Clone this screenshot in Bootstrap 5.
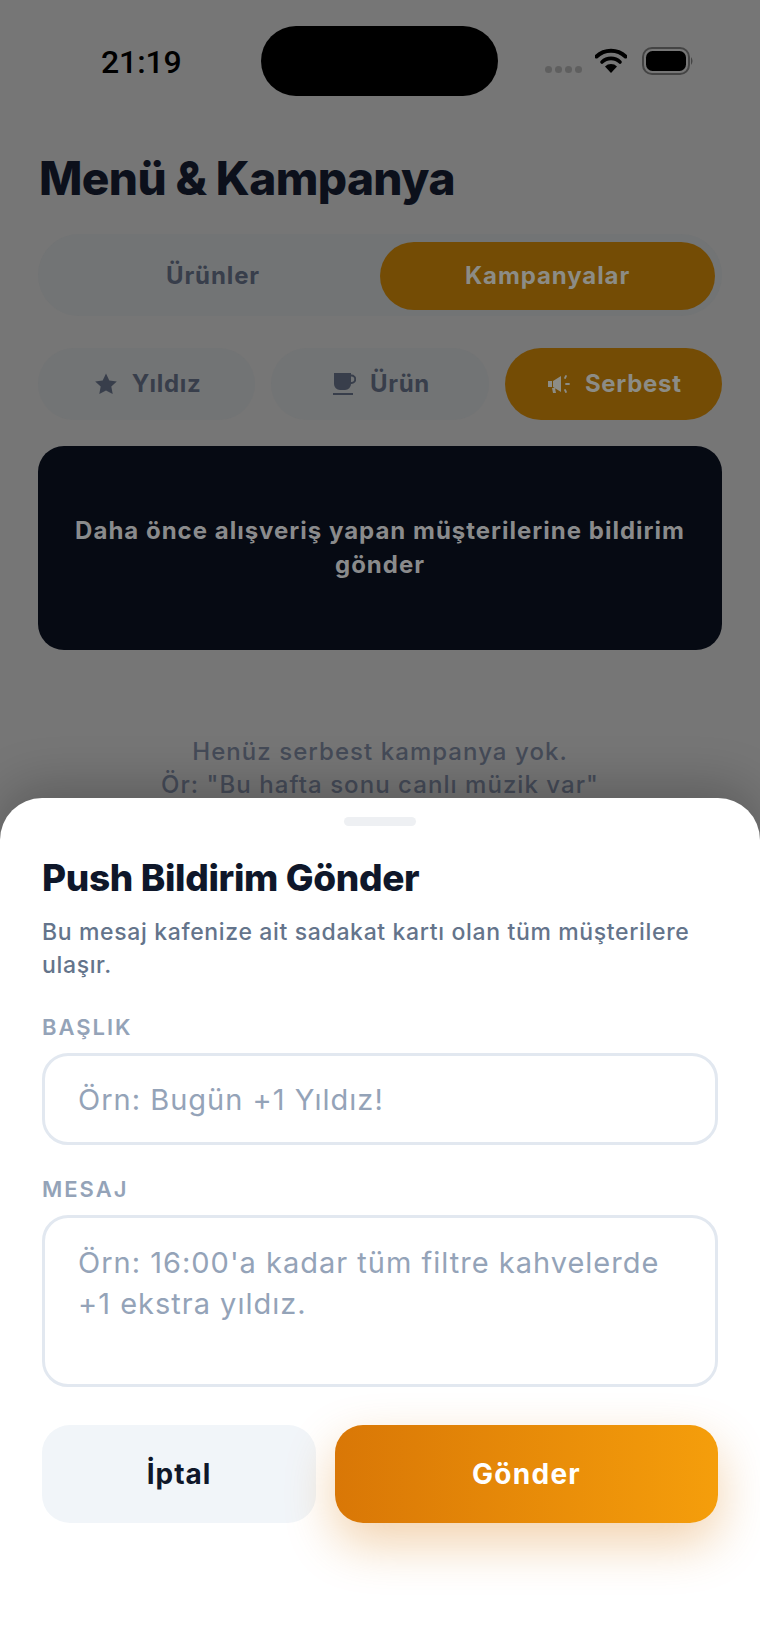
<!DOCTYPE html>
<html lang="tr">
<head>
  <meta charset="UTF-8">
  <meta name="viewport" content="width=device-width, initial-scale=1.0">
  <title>Menü & Kampanya</title>
  <link href="https://cdn.jsdelivr.net/npm/bootstrap@5.3.0/dist/css/bootstrap.min.css" rel="stylesheet">
  <style>
    html, body { height: 100%; }
    body {
      font-family: Inter, "Liberation Sans", sans-serif;
      background-color: #767676;
      overflow: hidden;
    }
    .phone { height: 1652px; }
    .status-row { height: 70px; margin-top: 26px; padding: 0 66px 0 101px; }
    .clock { width: 160px; padding-top: 2px; font-family: Roboto, sans-serif; font-size: 32px; font-weight: 500; color: #000; letter-spacing: -.1px; }
    .island { width: 237px; height: 70px; background: #000; border-radius: 35px; }
    .sig-row { gap: 3px; margin-right: 13px; margin-top: 16px; }
    .sig-dot { width: 7px; height: 7px; background: #5f5f5f; border-radius: 50%; }
    .wifi-ico { margin-right: 15px; }
    .screen-pad { padding: 0 38px; }
    .screen-title { margin: 54px 0 0 1px; font-size: 46px; font-weight: 800; line-height: 56px; color: #0c101b; letter-spacing: -.6px; }
    .seg-box { margin-top: 28px; height: 82px; padding: 8px 7px 6px 8px; background: #727475; border-radius: 41px; }
    .seg-item { flex: 1 1 0; height: 68px; padding-left: 8px; font-size: 24px; font-weight: 700; letter-spacing: .9px; color: #383e4b; border-radius: 34px; }
    .chip-item { height: 72px; padding-left: 2px; font-size: 24px; font-weight: 700; letter-spacing: .7px; color: #383e4b; background: #727475; border-radius: 36px; gap: 14px; }
    .chip-item svg { width: 24px; height: 24px; }
    .seg-item.amber-on { flex: 0 0 335px; padding-left: 0; }
    .seg-item.amber-on, .chip-item.amber-on { background: #744c05; color: #8c8c86; }
    .chip-row { margin-top: 32px; }
    .dark-panel { margin-top: 26px; height: 204px; background: #060a13; border-radius: 26px; padding: 0 30px; color: #8a8b8c; font-size: 24px; font-weight: 700; line-height: 34px; letter-spacing: 1px; }
    .empty-note { margin-top: 85px; font-size: 24px; font-weight: 500; line-height: 33px; color: #454b58; letter-spacing: 1.05px; }
    .sheet {
      position: absolute; left: 0; right: 0; bottom: 0; top: 798px;
      background: #fff; border-radius: 42px 42px 0 0;
      box-shadow: 0 -12px 50px rgba(0,0,0,.22);
      padding: 19px 42px 0;
    }
    .grab-bar { width: 72px; height: 9px; background: #eef0f3; border-radius: 5px; margin: 0 auto; }
    .sheet-title { margin: 30px 0 0; font-size: 37px; font-weight: 800; line-height: 44px; color: #0f172a; letter-spacing: -.35px; }
    .sheet-sub { margin: 16px 0 0; font-size: 23px; font-weight: 500; line-height: 33px; color: #64748b; letter-spacing: .65px; }
    .field-cap { margin: 0; font-size: 22px; font-weight: 600; line-height: 28px; color: #94a3b8; letter-spacing: 2px; }
    .cap-first { margin-top: 31px; }
    .cap-next { margin-top: 30px; }
    .field-box {
      margin-top: 12px;
      border: 3px solid #e2e8f0; border-radius: 26px; background: #fff;
      padding: 0 33px; height: 92px; font-size: 29px; letter-spacing: 1px; color: #334155;
    }
    .field-box::placeholder { color: #94a3b8; opacity: 1; }
    textarea.field-box { height: 172px; padding-top: 24px; line-height: 41px; resize: none; }
    .act-row { margin-top: 38px; }
    .act-btn { height: 98px; border: 0; border-radius: 28px; font-size: 28px; font-weight: 700; letter-spacing: 1px; }
    .act-cancel { width: 274px; background: #f1f5f9; color: #0f172a; }
    .act-send { width: 383px; letter-spacing: 1.3px; color: #fff; background: linear-gradient(90deg, #d97706, #f59e0b); box-shadow: 0 20px 50px rgba(217,119,6,.33); }
  </style>
</head>
<body class="m-0">

<div class="phone position-relative overflow-hidden">

  <div class="status-row d-flex align-items-center">
    <div class="clock">21:19</div>
    <div class="island"></div>
    <div class="d-flex align-items-center ms-auto">
      <div class="sig-row d-flex">
        <span class="sig-dot"></span><span class="sig-dot"></span><span class="sig-dot"></span><span class="sig-dot"></span>
      </div>
      <svg width="32" height="26" viewBox="0 0 32 26" class="wifi-ico">
        <path d="M1.500 8.500a21 21 0 0 1 29 0" fill="none" stroke="#000" stroke-width="4" stroke-linecap="round"/>
        <path d="M7 14a13 13 0 0 1 18 0" fill="none" stroke="#000" stroke-width="3.600" stroke-linecap="round"/>
        <path d="M16 25l-6-6.500a8.500 8.500 0 0 1 12 0z"/>
      </svg>
      <svg width="52" height="28" viewBox="0 0 52 28">
        <rect x="1" y="1" width="46" height="26" rx="9" fill="none" stroke="#444" stroke-width="2"/>
        <rect x="4" y="4" width="40" height="20" rx="6.500"/>
        <path d="M49 10q3 4 0 8z" fill="#444"/>
      </svg>
    </div>
  </div>

  <div class="screen-pad">
    <h1 class="screen-title">Menü &amp; Kampanya</h1>

    <div class="seg-box d-flex gap-2">
      <div class="seg-item d-flex align-items-center justify-content-center">Ürünler</div>
      <div class="seg-item amber-on d-flex align-items-center justify-content-center">Kampanyalar</div>
    </div>

    <div class="chip-row row g-0 gx-3">
      <div class="col-4">
        <div class="chip-item d-flex align-items-center justify-content-center">
          <svg viewBox="0 0 24 24"><path fill="#383e4b" d="M12 1.500l3.300 6.900 7.500 1-5.500 5.200 1.400 7.500-6.700-3.600-6.700 3.600 1.400-7.500-5.500-5.200 7.500-1z"/></svg>
          <span>Yıldız</span>
        </div>
      </div>
      <div class="col-4">
        <div class="chip-item d-flex align-items-center justify-content-center">
          <svg viewBox="0 0 24 24"><path fill="#383e4b" d="M2 1h17v1.500h.5a4.500 4.500 0 0 1 0 9.500H19a6 6 0 0 1-6 6H8a6 6 0 0 1-6-6zM19 4.500v5.500h.5a2.750 2.750 0 0 0 0-5.500zM1 21h20v2H1z"/></svg>
          <span>Ürün</span>
        </div>
      </div>
      <div class="col-4">
        <div class="chip-item amber-on d-flex align-items-center justify-content-center">
          <svg viewBox="0 0 24 24"><path fill="#8c8c86" d="M1 9h4v6H1zM6 9l8-5v16l-8-5zM5 16h3l1 5H6z"/><path fill="none" stroke="#8c8c86" stroke-width="1.800" stroke-linecap="round" d="M18 6l1-2M19 12h3M18 18l1 2"/></svg>
          <span>Serbest</span>
        </div>
      </div>
    </div>

    <div class="dark-panel d-flex align-items-center justify-content-center text-center">
      <div>Daha önce alışveriş yapan müşterilerine bildirim gönder</div>
    </div>

    <p class="empty-note text-center mb-0">Henüz serbest kampanya yok.<br>Ör: "Bu hafta sonu canlı müzik var"</p>
  </div>

  <div class="sheet">
    <div class="grab-bar"></div>
    <h2 class="sheet-title">Push Bildirim Gönder</h2>
    <p class="sheet-sub">Bu mesaj kafenize ait sadakat kartı olan tüm müşterilere ulaşır.</p>

    <form>
      <label class="field-cap cap-first d-block" for="pushTitle">BAŞLIK</label>
      <input id="pushTitle" type="text" class="field-box form-control shadow-none" placeholder="Örn: Bugün +1 Yıldız!">
      <label class="field-cap cap-next d-block" for="pushBody">MESAJ</label>
      <textarea id="pushBody" class="field-box form-control shadow-none" placeholder="Örn: 16:00'a kadar tüm filtre kahvelerde +1 ekstra yıldız."></textarea>
      <div class="act-row d-flex justify-content-between">
        <button type="button" class="btn act-btn act-cancel">İptal</button>
        <button type="button" class="btn act-btn act-send">Gönder</button>
      </div>
    </form>
  </div>

</div>

<script src="https://cdn.jsdelivr.net/npm/bootstrap@5.3.0/dist/js/bootstrap.bundle.min.js"></script>
</body>
</html>
